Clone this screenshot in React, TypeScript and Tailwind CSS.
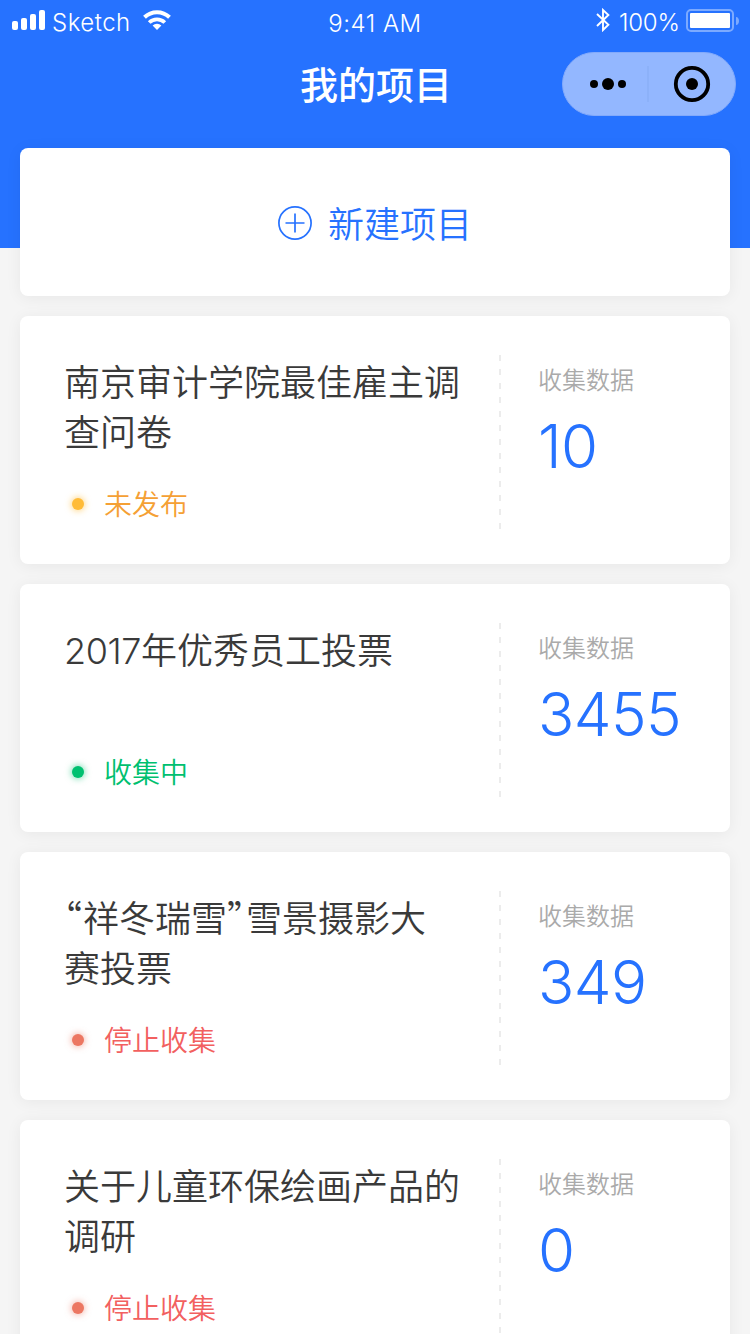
const sans = "font-['Inter','Noto_Sans_CJK_SC',sans-serif]";

const projects = [
    { id: 1, lines: ["南京审计学院最佳雇主调", "查问卷"], status: "draft", count: 10 },
    { id: 2, lines: ["2017年优秀员工投票"], status: "active", count: 3455 },
    { id: 3, lines: ["“祥冬瑞雪”雪景摄影大", "赛投票"], status: "stopped", count: 349 },
    { id: 4, lines: ["关于儿童环保绘画产品的", "调研"], status: "stopped", count: 0 },
];

const statuses: any = {
    draft: { label: "未发布", text: "text-[#f5a034]", dot: "bg-[#ffbb37] shadow-[0_0_6px_1px_rgba(255,187,55,0.6)]" },
    active: { label: "收集中", text: "text-[#00c070]", dot: "bg-[#00c070] shadow-[0_0_6px_1px_rgba(0,192,112,0.5)]" },
    stopped: { label: "停止收集", text: "text-[#f2605f]", dot: "bg-[#ec7762] shadow-[0_0_6px_1px_rgba(236,119,98,0.5)]" },
};

function StatusBar() {
    return (
        <div className="relative flex h-10 items-center text-[24px] font-normal leading-10 text-white">
            <svg className="ml-3 mb-[1px]" width="33" height="20" viewBox="0 0 33 20" fill="currentColor">
                <rect x="0" y="11" width="6" height="9" rx="2" />
                <rect x="9" y="8" width="6" height="12" rx="2" />
                <rect x="18" y="4" width="6" height="16" rx="2" />
                <rect x="27" y="0" width="6" height="20" rx="2" />
            </svg>
            <span className="ml-[7px] mt-[6px] w-[78px] font-[350] tracking-[0.5px]">Sketch</span>
            <svg className="ml-3 mb-[1px]" width="30" height="20" viewBox="0 0 30 20" fill="none" stroke="currentColor" strokeWidth="4">
                <path d="M2.5 7.3a17.9 17.9 0 0 1 25 0" />
                <path d="M7.2 12.5a11.2 11.2 0 0 1 15.6 0" strokeWidth="3.8" />
                <path d="M15 20l-4.4-4.5a6.6 6.6 0 0 1 8.8 0z" fill="currentColor" stroke="none" />
            </svg>
            <span className="absolute inset-x-0 top-1 text-center font-[350] tracking-[0.5px]">9:41 AM</span>
            <svg className="ml-auto" width="14" height="24" viewBox="0 0 14 24" fill="none" stroke="currentColor" strokeWidth="1.9">
                <path d="M1 6l11.4 10.7L7 22v-20l5.4 5L1 18" />
            </svg>
            <span className="ml-[9px] mt-[6px] w-[61px] whitespace-nowrap font-[350] tracking-[-0.2px]">100%</span>
            <svg className="ml-1.5 mr-[11px]" width="53" height="24" viewBox="0 0 53 24" fill="none">
                <rect x="1" y="2" width="46" height="21" rx="4" stroke="#fff" strokeOpacity="0.4" strokeWidth="2" />
                <rect x="4" y="5" width="40" height="15" rx="1" fill="#fff" />
                <path d="M50 9c2 0 3 2 3 4s-1 4-3 4z" fill="#fff" fillOpacity="0.4" />
            </svg>
        </div>
    );
}

function Capsule() {
    return (
        <div className="absolute right-[14px] top-3 flex h-16 w-[174px] items-center rounded-full border border-[#83aafb] bg-[#93b7ff]">
            <svg width="172" height="62" viewBox="0 0 172 62">
                <circle cx="31" cy="31" r="4" />
                <circle cx="45" cy="31" r="6" />
                <circle cx="59" cy="31" r="4" />
                <path d="M85 13v36" stroke="#8aaff7" strokeWidth="1.5" />
                <circle cx="129" cy="31" r="16.2" fill="none" stroke="#000" strokeWidth="3.8" />
                <circle cx="129" cy="31" r="6" />
            </svg>
        </div>
    );
}

// 引用符は半角幅、数字は少し詰める
function TitleLine(props: any) {
    const parts = props.text.split(/([“”]|\d+)/).filter(Boolean);

    return (
        <div className="h-[50px]">
            {parts.map((part: string, i: number) => {
                if (/[“”]/.test(part)) {
                    return <span key={i} className="font-['Noto_Sans_CJK_SC',sans-serif] leading-none tracking-[1px] [font-feature-settings:'halt']">{part}</span>;
                }
                if (/\d/.test(part)) {
                    return <span key={i} className="tracking-[-0.4px]">{part}</span>;
                }
                return part;
            })}
        </div>
    );
}

function ProjectCard(props: any) {
    const { lines, status, count } = props;
    const s = statuses[status];

    return (
        <div className="flex h-[248px] shrink-0 rounded-lg bg-white shadow-[0_2px_16px_rgba(0,0,0,0.06)]">
            <div className="flex w-[479px] flex-col pl-[44px] pt-[42px]">
                <div className="h-[100px] whitespace-nowrap text-[36px] leading-[50px] text-[#3a3a3a]">
                    {lines.map((line: string) => (
                        <TitleLine key={line} text={line} />
                    ))}
                </div>
                <div className="mt-[26px] flex h-10 items-center">
                    <span className={`ml-2 size-3 rounded-full ${s.dot}`} />
                    <span className={`ml-5 mt-[2px] text-[28px] leading-10 ${s.text}`}>{s.label}</span>
                </div>
            </div>
            <div className="mt-[39px] h-[174px] w-0.5 bg-[repeating-linear-gradient(to_bottom,#ececec_0_6px,transparent_6px_14px)]" />
            <div className="pl-[37px] pt-[48px]">
                <div className="text-[24px] leading-[33px] text-[#aaa]">收集数据</div>
                <div className="mt-[7px] text-[60px] font-[280] leading-[84px] tracking-[-0.6px] text-[#2672ff]">{count}</div>
            </div>
        </div>
    );
}

export default function App() {
    return (
        <div lang="zh-CN" className={`h-[1334px] w-[750px] overflow-hidden bg-[#f5f5f5] font-[350] ${sans}`}>
            {/* ヘッダー */}
            <div className="h-[248px] bg-[#2672ff]">
                <StatusBar />
                <div className="relative h-[88px] pl-[2px] text-center text-[38px] font-medium leading-[90px] text-white">
                    我的项目
                    <Capsule />
                </div>
            </div>
            {/* プロジェクト一覧 */}
            <div className="relative -mt-[100px] flex flex-col gap-5 px-5">
                <div className="flex h-[148px] shrink-0 items-center justify-center rounded-lg bg-white pt-[2px] text-[36px] text-[#2672ff] shadow-[0_2px_16px_rgba(0,0,0,0.06)]">
                    <svg className="mr-4" width="34" height="34" viewBox="0 0 34 34" fill="none" stroke="currentColor" strokeWidth="1.7">
                        <circle cx="17" cy="17" r="16.1" />
                        <path d="M7.5 17h19M17 7.5v19" />
                    </svg>
                    <span className="mt-[3px]">新建项目</span>
                </div>
                {projects.map((project) => (
                    <ProjectCard key={project.id} {...project} />
                ))}
            </div>
        </div>
    );
}
